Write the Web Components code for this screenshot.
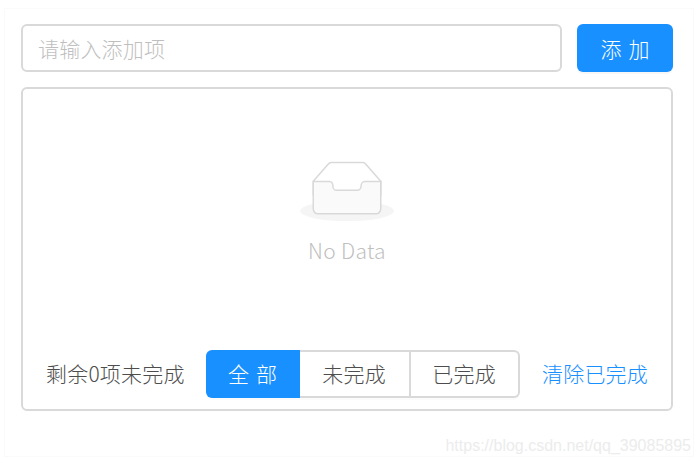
<!DOCTYPE html>
<html lang="zh">
<head>
<meta charset="utf-8">
<title>Todo</title>
<style>
  html, body { margin: 0; background: #fff; }
  body {
    height: 463px;
    overflow: hidden;
    font-family: "Noto Sans CJK SC", "Liberation Sans", sans-serif;
    font-size: 21px;
    font-weight: 300;
    letter-spacing: .2px;
    color: #4d4d4d;
  }
</style>
</head>
<body>
<todo-app>
  <todo-add slot="top" placeholder="请输入添加项" label="添 加"></todo-add>
  <todo-empty slot="list">No Data</todo-empty>
  <todo-footer slot="footer" left="剩余0项未完成" clear="清除已完成">
    <todo-tab active>全 部</todo-tab>
    <todo-tab>未完成</todo-tab>
    <todo-tab last>已完成</todo-tab>
  </todo-footer>
</todo-app>
<script>
const appTemplate = document.createElement('template');
appTemplate.innerHTML = `
  <style>
  :host {
    display: block;
    position: relative;
    box-sizing: border-box;
    width: 690px;
    height: 449px;
    margin: 8px 0 0 4px;
    padding: 15px 20px 0 16px;
    border: 1px solid #fafafa;
  }
  .panel {
    box-sizing: border-box;
    display: flex;
    flex-direction: column;
    height: 324px;
    margin-top: 15px;
    border: 2px solid #d9d9d9;
    border-radius: 6px;
  }
  .mark {
    position: absolute;
    right: 2px;
    bottom: 0;
    font: 16px/20px "Liberation Sans", sans-serif;
    letter-spacing: 0;
    color: #ececec;
  }
  </style>
  <slot name="top"></slot>
  <div class="panel">
    <slot name="list"></slot>
    <slot name="footer"></slot>
  </div>
  <div class="mark">https://blog.csdn.net/qq_39085895</div>
`;

class TodoApp extends HTMLElement {
  constructor() {
    super();
    this.attachShadow({ mode: 'open' });
    this.shadowRoot.appendChild(appTemplate.content.cloneNode(true));
  }
}

const addTemplate = document.createElement('template');
addTemplate.innerHTML = `
  <style>
  :host {
    display: flex;
    gap: 15px;
    height: 48px;
  }
  .input {
    flex: 1;
    box-sizing: border-box;
    display: flex;
    align-items: center;
    padding: 0 15px;
    border: 2px solid #d9d9d9;
    border-radius: 6px;
    color: #bfbfbf;
  }
  .btn {
    width: 96px;
    display: flex;
    align-items: center;
    justify-content: center;
    border-radius: 6px;
    background: #1890ff;
    color: #fff;
    box-shadow: 0 2px 0 rgba(0, 0, 0, .03);
    white-space: pre;
    word-spacing: 2px;
  }
  </style>
  <div class="input"></div>
  <div class="btn"></div>
`;

class TodoAdd extends HTMLElement {
  constructor() {
    super();
    this.attachShadow({ mode: 'open' });
    this.shadowRoot.appendChild(addTemplate.content.cloneNode(true));
  }

  connectedCallback() {
    this.shadowRoot.querySelector('.input').textContent = this.getAttribute('placeholder');
    this.shadowRoot.querySelector('.btn').textContent = this.getAttribute('label');
  }
}

const emptyTemplate = document.createElement('template');
emptyTemplate.innerHTML = `
  <style>
  :host {
    display: flex;
    flex-direction: column;
    align-items: center;
    height: 259px;
    padding-top: 71.5px;
    box-sizing: border-box;
    color: #bfbfbf;
  }
  svg { display: block; }
  .text { margin-top: 11px; line-height: 36px; letter-spacing: .3px; }
  </style>
  <svg width="94" height="60.2" viewBox="0 0 64 41">
    <g transform="translate(0 1)" fill="none" fill-rule="evenodd">
      <ellipse fill="#f5f5f5" cx="32" cy="33" rx="32" ry="7"></ellipse>
      <g fill-rule="nonzero" stroke="#d9d9d9">
        <path d="M55 12.76L44.854 1.258C44.367.474 43.656 0 42.907 0H21.093c-.749 0-1.46.474-1.947 1.257L9 12.761V22h46v-9.24z"></path>
        <path d="M41.613 15.931c0-1.605.994-2.93 2.227-2.931H55v18.137C55 33.26 53.68 35 52.05 35h-40.1C10.32 35 9 33.259 9 31.137V13h11.16c1.233 0 2.227 1.323 2.227 2.928v.022c0 1.605 1.005 2.901 2.237 2.901h14.752c1.232 0 2.237-1.308 2.237-2.913v-.007z" fill="#fafafa"></path>
      </g>
    </g>
  </svg>
  <div class="text"><slot></slot></div>
`;

class TodoEmpty extends HTMLElement {
  constructor() {
    super();
    this.attachShadow({ mode: 'open' });
    this.shadowRoot.appendChild(emptyTemplate.content.cloneNode(true));
  }
}

const footerTemplate = document.createElement('template');
footerTemplate.innerHTML = `
  <style>
  :host {
    display: flex;
    align-items: center;
    height: 48px;
    margin-top: 2px;
    padding: 0 23px;
  }
  .tabs { display: flex; margin: 0 auto 0 21px; }
  .left, .clear { margin-bottom: 2px; }
  .clear { color: #1890ff; }
  </style>
  <span class="left"></span>
  <div class="tabs"><slot></slot></div>
  <span class="clear"></span>
`;

class TodoFooter extends HTMLElement {
  constructor() {
    super();
    this.attachShadow({ mode: 'open' });
    this.shadowRoot.appendChild(footerTemplate.content.cloneNode(true));
  }

  connectedCallback() {
    this.shadowRoot.querySelector('.left').textContent = this.getAttribute('left');
    this.shadowRoot.querySelector('.clear').textContent = this.getAttribute('clear');
  }
}

const tabTemplate = document.createElement('template');
tabTemplate.innerHTML = `
  <style>
  :host {
    box-sizing: border-box;
    display: flex;
    align-items: center;
    justify-content: center;
    width: 111px;
    height: 48px;
    padding-bottom: 2px;
    border: 2px solid #d9d9d9;
    border-left: 0;
    box-shadow: 0 2px 0 rgba(0, 0, 0, .015);
    white-space: pre;
  }
  :host([active]) {
    width: 94px;
    border: 0;
    border-radius: 6px 0 0 6px;
    background: #1890ff;
    color: #fff;
    word-spacing: 2px;
  }
  :host([last]) { width: 109px; border-radius: 0 6px 6px 0; }
  </style>
  <slot></slot>
`;

class TodoTab extends HTMLElement {
  constructor() {
    super();
    this.attachShadow({ mode: 'open' });
    this.shadowRoot.appendChild(tabTemplate.content.cloneNode(true));
  }
}

customElements.define('todo-app', TodoApp);
customElements.define('todo-add', TodoAdd);
customElements.define('todo-empty', TodoEmpty);
customElements.define('todo-footer', TodoFooter);
customElements.define('todo-tab', TodoTab);
</script>
</body>
</html>
